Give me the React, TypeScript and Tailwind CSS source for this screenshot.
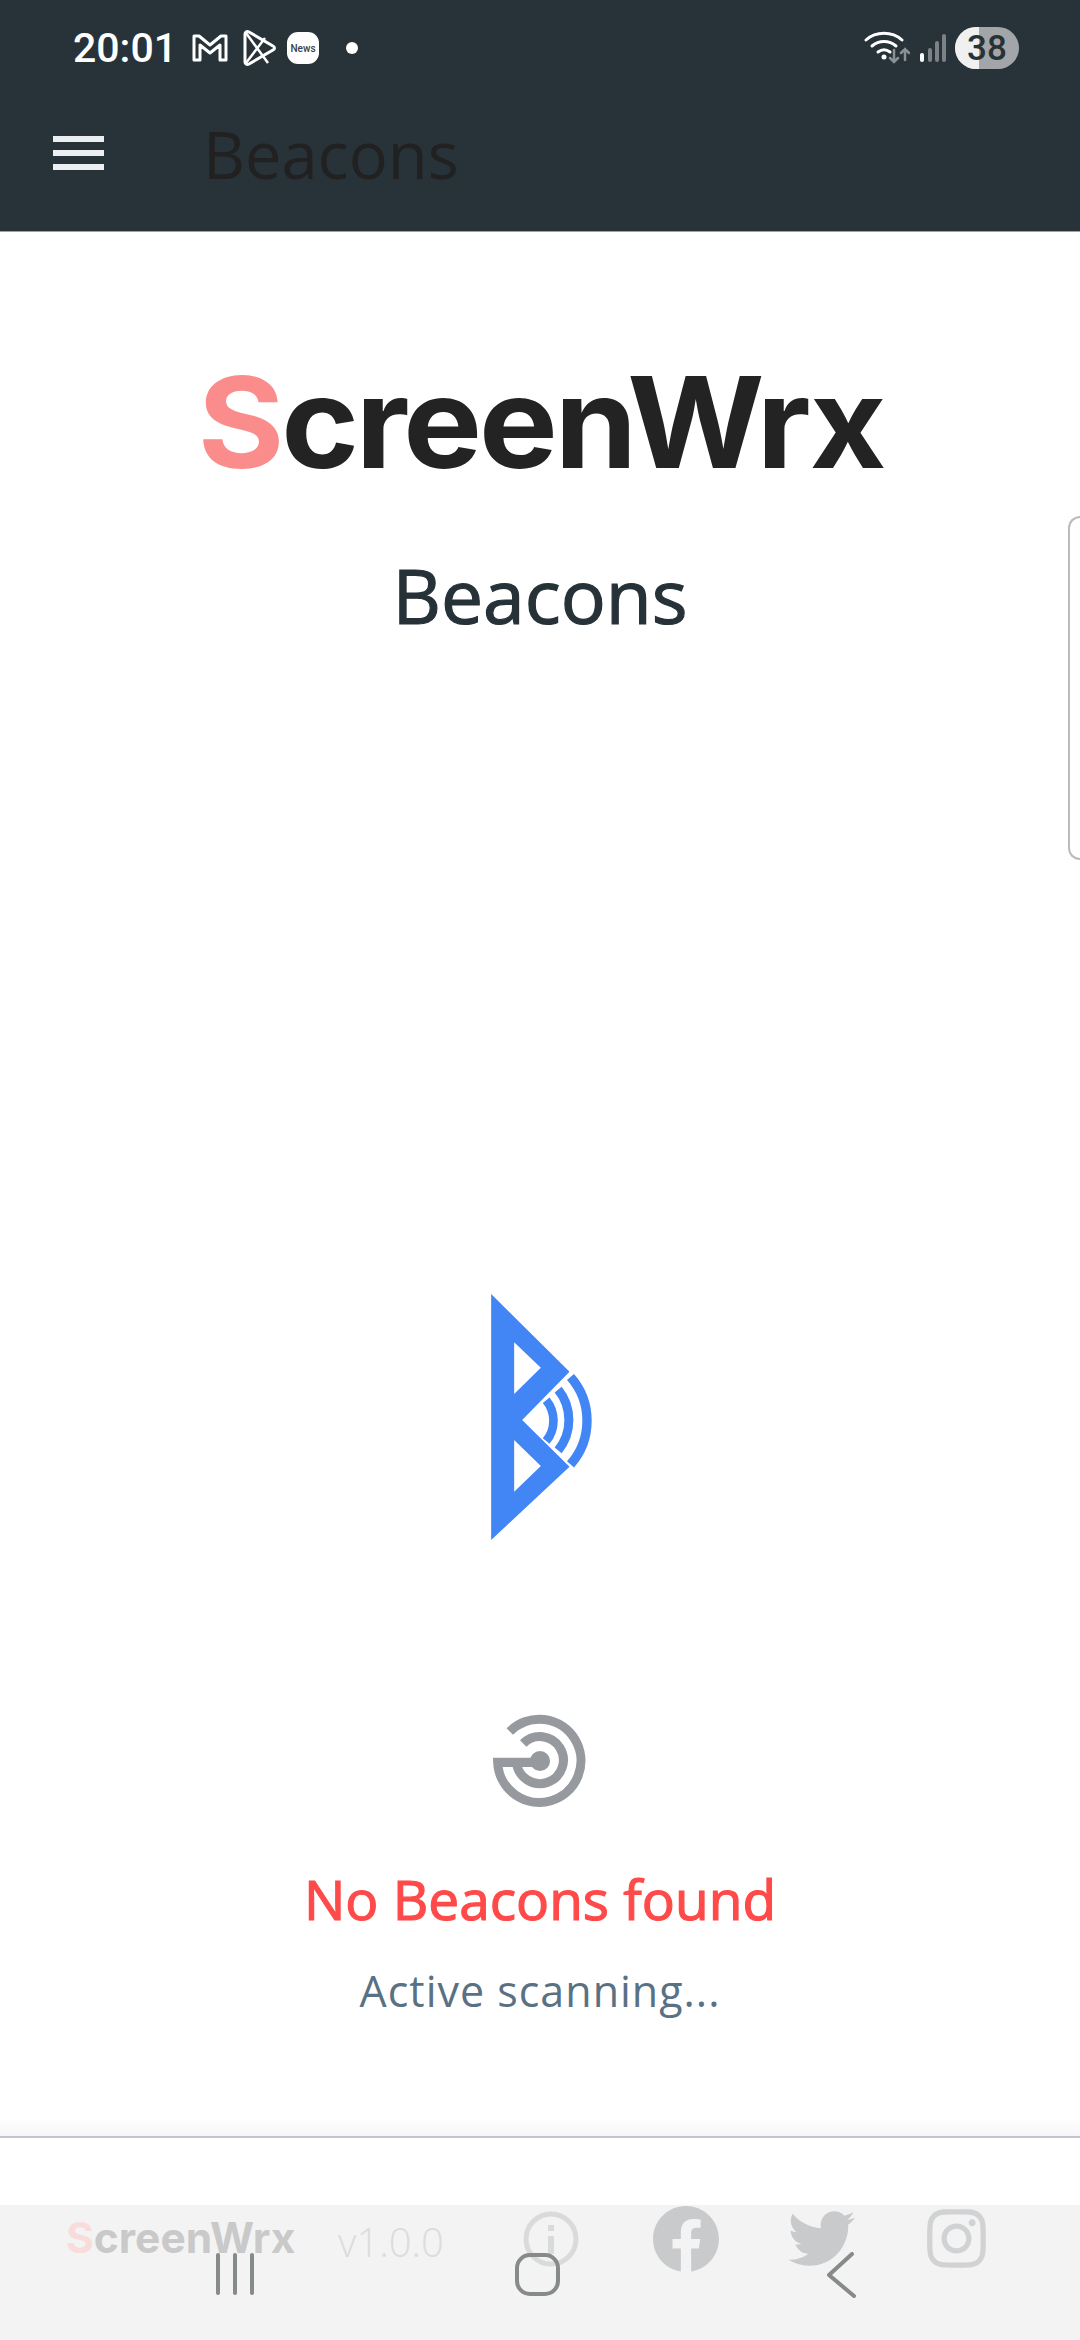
import React from 'react';
import { FaFacebook, FaTwitter, FaInstagram } from 'react-icons/fa';

// status bar glyphs
const GmailIcon = () => (
  <svg width="36" height="30" viewBox="0 0 36 30" fill="none" stroke="#fff" strokeWidth="3" strokeLinejoin="round">
    <path d="M2 3h5l11 9 11-9h5v24h-6V12l-10 8-10-8v15H2z" />
  </svg>
);

const PlayIcon = () => (
  <svg width="33" height="36" viewBox="0 0 33 36" fill="none" stroke="#fff" strokeWidth="3" strokeLinejoin="round">
    <path d="M2 4c0-2 2-3 4-2l24 14c2 1 2 3 0 4L6 34c-2 1-4 0-4-2z" />
    <path d="M3 3l22 30M3 33L22 8" strokeWidth="2.5" />
  </svg>
);

const WifiIcon = () => (
  <svg width="46" height="34" viewBox="0 0 46 34" fill="none" strokeLinecap="round">
    <path d="M2 9c10-9 26-9 36 0" stroke="#fff" strokeWidth="3" />
    <path d="M8 15c7-6 17-6 24 0" stroke="#fff" strokeWidth="3" />
    <path d="M14 21c4-3 8-3 12 0" stroke="#fff" strokeWidth="3" />
    <circle cx="20" cy="26" r="2.5" fill="#fff" />
    <path d="M30 19v12M26 27l4 4 4-4" stroke="#8a9094" strokeWidth="2.5" />
    <path d="M41 29V18M37 22l4-4 4 4" stroke="#8a9094" strokeWidth="2.5" />
  </svg>
);

const SignalIcon = () => (
  <svg width="28" height="30" viewBox="0 0 28 30" strokeWidth="4" strokeLinecap="round">
    <path d="M3 22v5" stroke="#fff" />
    <path d="M11 17v10M18 10v17M25 3v24" stroke="#7c8286" />
  </svg>
);

const BeaconLogo = () => (
  <svg width="102" height="246" viewBox="153 77 305 738" className="ml-1">
    <path
      fill="#4285f4"
      fillRule="evenodd"
      d="M153 77L388 310L246 455L388 595L153 815ZM222 222V377L302 298ZM222 515V670L302 593Z"
    />
    <g fill="none" stroke="#4285f4">
      <path strokeWidth="26" d="M318 396A96 96 0 0 1 318 518" />
      <path strokeWidth="27" d="M354 364A145 145 0 0 1 354 546" />
      <path strokeWidth="28" d="M391 326A198 198 0 0 1 391 588" />
    </g>
  </svg>
);

const RadarIcon = () => (
  <svg width="94" height="94" viewBox="100 70 280 280" fill="none" stroke="#969a9e" strokeWidth="27">
    <path d="M150 122A124 124 0 1 1 114 214H240" />
    <path d="M190 158A70 70 0 1 1 170 214" />
    <circle cx="240" cy="210" r="30" fill="#969a9e" stroke="none" />
  </svg>
);

const InfoIcon = () => (
  <svg width="56" height="56" viewBox="0 0 56 56" fill="none" stroke="#d8dadb" strokeWidth="5">
    <circle cx="28" cy="28" r="25" />
    <path d="M28 14v6M28 25v18" strokeWidth="6" />
  </svg>
);

const App = () => {
  return (
    <div className="relative flex h-[2340px] w-[1080px] flex-col overflow-hidden bg-white font-['Open_Sans',sans-serif]">
      <header className="h-[232px] border-b border-[#9aa3a8] bg-[#283339]">
        <div className="flex h-[96px] items-center pl-[73px] pr-[61px]">
          <span className="mr-[15px] font-['Roboto',sans-serif] text-[41px] font-medium leading-none text-white">20:01</span>
          <GmailIcon />
          <span className="ml-[15px]"><PlayIcon /></span>
          <span className="ml-[11px] flex h-[32px] w-[32px] items-center justify-center rounded-[11px] bg-white font-['Roboto',sans-serif] text-[10px] font-medium text-[#3a4246]">News</span>
          <span className="ml-[27px] h-[12px] w-[12px] rounded-full bg-white" />
          <div className="ml-auto flex items-center">
            <WifiIcon />
            <span className="ml-[9px]"><SignalIcon /></span>
            <div className="relative ml-[8px] flex h-[42px] w-[64px] items-center justify-center overflow-hidden rounded-full bg-[#a2a6a8]">
              <span className="absolute inset-y-0 left-0 w-[24px] bg-[#f0f0f0]" />
              <span className="relative font-['Roboto',sans-serif] text-[35px] font-medium leading-none text-[#273238]">38</span>
            </div>
          </div>
        </div>
        <div className="flex h-[120px] items-center pb-[6px] pl-[53px]">
          <div className="flex w-[51px] flex-col gap-[8px]">
            <div className="h-[6px] bg-[#eceff1]" />
            <div className="h-[6px] bg-[#eceff1]" />
            <div className="h-[6px] bg-[#eceff1]" />
          </div>
          <h1 className="ml-[99px] mt-[2px] text-[65px] leading-none text-[#212121]">Beacons</h1>
        </div>
      </header>

      <main className="relative flex flex-1 flex-col items-center">
        <div className="mt-[127px] scale-x-[1.05] font-['Inter',sans-serif] text-[126px] font-bold leading-none tracking-[-3px] text-[#232323]">
          <span className="text-[#fb8c8c]">S</span>creenWrx
        </div>
        <h2 className="mt-[73px] text-[75px] leading-none text-[#263238] [-webkit-text-stroke:1.2px_#263238]">Beacons</h2>
        <div className="mt-[661px]"><BeaconLogo /></div>
        <div className="mt-[174px]"><RadarIcon /></div>
        <p className="mt-[63px] text-[55px] leading-none text-[#ff4a4a] [-webkit-text-stroke:1.2px_#ff4a4a]">No Beacons found</p>
        <p className="mt-[43px] text-[43px] leading-none tracking-[1px] text-[#5a7184]">Active scanning...</p>
        <div className="absolute bottom-0 left-0 right-0 h-[18px] bg-gradient-to-b from-white to-[#f6f6f6]" />
        <div className="absolute right-0 top-[284px] h-[344px] w-[12px] rounded-l-[14px] border-y-2 border-l-2 border-[#bbbbbb]" />
      </main>

      <footer className="border-t-2 border-[#c6c2d0]">
        <div className="h-[67px] bg-white" />
        <div className="flex h-[135px] items-start bg-[#f3f3f3]">
          <div className="ml-[66px] mt-[12px] w-[229px] font-['Inter',sans-serif] text-[42.5px] font-bold leading-none text-[#c9c9c9]">
            <span className="text-[#f8dcdc]">S</span>creenWrx
          </div>
          <span className="ml-[43px] mt-[17px] w-[106px] text-[40px] font-light leading-none text-[#dcdcdc]">v1.0.0</span>
          <span className="ml-[79px] mt-[6px]"><InfoIcon /></span>
          <span className="ml-[73px]"><FaFacebook size={68} color="#c8cacb" /></span>
          <span className="ml-[68px]"><FaTwitter size={67} color="#c8cacb" /></span>
          <span className="ml-[68px]"><FaInstagram size={67} color="#d0d2d3" /></span>
        </div>
        <nav className="absolute bottom-0 left-0 right-0 flex h-[87px] items-start">
          <div className="ml-[216px] flex gap-[13px]">
            <div className="h-[42px] w-[4px] rounded-full bg-[#868a89]" />
            <div className="h-[42px] w-[4px] rounded-full bg-[#868a89]" />
            <div className="h-[42px] w-[4px] rounded-full bg-[#868a89]" />
          </div>
          <div className="ml-[261px] h-[43px] w-[45px] rounded-[15px] border-[4px] border-[#868a89]" />
          <svg width="30" height="46" viewBox="0 0 30 46" fill="none" stroke="#868a89" strokeWidth="4" strokeLinecap="round" strokeLinejoin="round" className="ml-[266px] -mt-[1px]">
            <path d="M26 2L3 23l25 21" />
          </svg>
        </nav>
      </footer>
    </div>
  );
};

export default App;
